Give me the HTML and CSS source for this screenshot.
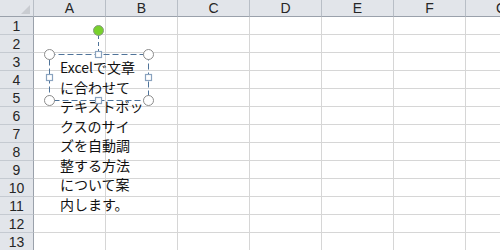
FILE: index.html
```html
<!DOCTYPE html>
<html lang="ja">
<head>
    <meta charset="UTF-8">
    <title>Excel テキストボックス</title>
    <link rel="stylesheet" href="styles.css">
</head>
<body>
    <div class="sheet">
        <div class="grid">
            <div class="corner"><span class="corner-tri"></span></div>
            <div class="col-head">A</div>
            <div class="col-head">B</div>
            <div class="col-head">C</div>
            <div class="col-head">D</div>
            <div class="col-head">E</div>
            <div class="col-head">F</div>
            <div class="col-head">G</div>
        </div>
        <div class="grid body" id="rows"></div>

        <!-- selected text box -->
        <div class="textbox-text">
            <span class="line">Excelで文章</span>
            <span class="line">に合わせて</span>
            <span class="line">テキストボッ</span>
            <span class="line">クスのサイ</span>
            <span class="line">ズを自動調</span>
            <span class="line">整する方法</span>
            <span class="line">について案</span>
            <span class="line">内します。</span>
        </div>
        <svg class="selection" width="130" height="100" viewBox="0 0 130 100">
            <line x1="58.5" y1="15" x2="58.5" y2="31" class="stem"/>
            <rect x="9.5" y="34.5" width="99" height="46" class="frame"/>
            <circle cx="58.5" cy="10.5" r="5" class="rotate"/>
            <circle cx="9.5" cy="34.5" r="5" class="corner-h"/>
            <circle cx="108.5" cy="34.5" r="5" class="corner-h"/>
            <circle cx="9.5" cy="80.5" r="5" class="corner-h"/>
            <circle cx="108.5" cy="80.5" r="5" class="corner-h"/>
            <rect x="55.5" y="31.5" width="6" height="6" class="side-h"/>
            <rect x="55.5" y="77.5" width="6" height="6" class="side-h"/>
            <rect x="6.5" y="54.5" width="6" height="6" class="side-h"/>
            <rect x="105.5" y="54.5" width="6" height="6" class="side-h"/>
        </svg>
    </div>

    <script>
        const rows = document.getElementById('rows');
        for (let r = 1; r <= 13; r++) {
            const head = document.createElement('div');
            head.className = 'row-head';
            head.textContent = r;
            rows.appendChild(head);
            for (let c = 0; c < 7; c++) {
                const cell = document.createElement('div');
                cell.className = 'cell';
                rows.appendChild(cell);
            }
        }
    </script>
</body>
</html>
```
FILE: styles.css
```css
* {
    box-sizing: border-box;
}
body {
    margin: 0;
    background: #fff;
    overflow: hidden;
    font-family: 'Liberation Sans', Arial, sans-serif;
}
.sheet {
    position: relative;
    width: 500px;
    height: 250px;
    overflow: hidden;
}
.grid {
    display: grid;
    grid-template-columns: 34px repeat(7, 72px);
    grid-template-rows: 17px;
}
.grid.body {
    grid-template-rows: repeat(13, 18px);
}
.corner {
    background: #e2e5ea;
    border-right: 1px solid #b8bec6;
    border-bottom: 1px solid #9aa1ab;
    display: flex;
    align-items: flex-end;
    justify-content: flex-end;
    padding: 0 3px 2px 0;
}
.corner-tri {
    width: 0;
    height: 0;
    border-left: 9px solid transparent;
    border-bottom: 9px solid #c9ccd1;
}
.col-head {
    background: #e2e5ea;
    border-right: 1px solid #b8bec6;
    border-bottom: 1px solid #9aa1ab;
    text-align: center;
    font-size: 14px;
    line-height: 17px;
    color: #262626;
}
.row-head {
    background: #e2e5ea;
    border-right: 1px solid #9aa1ab;
    border-bottom: 1px solid #c5cad1;
    text-align: center;
    font-size: 14px;
    line-height: 18px;
    color: #262626;
}
.cell {
    border-right: 1px solid #d6d6d6;
    border-bottom: 1px solid #d6d6d6;
}
.textbox-text {
    position: absolute;
    left: 60px;
    top: 58px;
    font-family: 'Noto Sans CJK JP', sans-serif;
    font-size: 14px;
    line-height: 19.5px;
    color: #111;
}
.line {
    display: block;
    white-space: nowrap;
}
.selection {
    position: absolute;
    left: 40px;
    top: 20px;
}
.frame {
    fill: none;
    stroke: #4f7399;
    stroke-width: 1;
    stroke-dasharray: 6 3;
}
.stem {
    stroke: #4f7399;
    stroke-width: 1;
    stroke-dasharray: 4 3;
}
.rotate {
    fill: #78d12c;
    stroke: #8a9a86;
    stroke-width: 1;
}
.corner-h {
    fill: #fff;
    stroke: #8c8c8c;
    stroke-width: 1;
}
.side-h {
    fill: #fff;
    stroke: #8aa3bf;
    stroke-width: 1.2;
}
```
